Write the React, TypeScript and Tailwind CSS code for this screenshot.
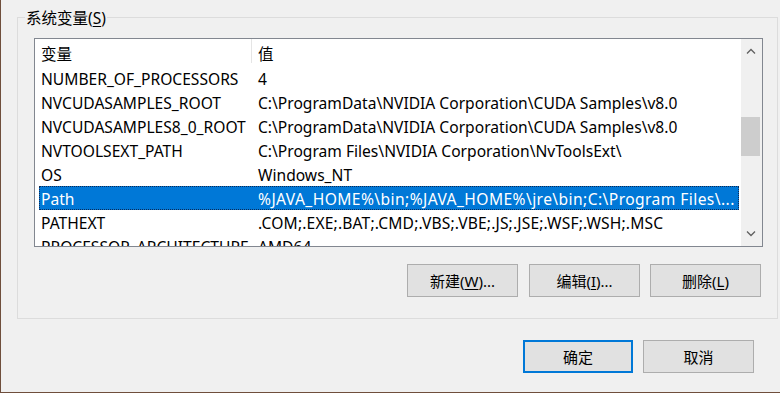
import React from "react";

const font = { fontFamily: '"Noto Sans", "Noto Sans CJK SC", sans-serif' };

const rows: [string, string][] = [
  ["NUMBER_OF_PROCESSORS", "4"],
  ["NVCUDASAMPLES_ROOT", "C:\\ProgramData\\NVIDIA Corporation\\CUDA Samples\\v8.0"],
  ["NVCUDASAMPLES8_0_ROOT", "C:\\ProgramData\\NVIDIA Corporation\\CUDA Samples\\v8.0"],
  ["NVTOOLSEXT_PATH", "C:\\Program Files\\NVIDIA Corporation\\NvToolsExt\\"],
  ["OS", "Windows_NT"],
  ["Path", "%JAVA_HOME%\\bin;%JAVA_HOME%\\jre\\bin;C:\\Program Files\\..."],
  ["PATHEXT", ".COM;.EXE;.BAT;.CMD;.VBS;.VBE;.JS;.JSE;.WSF;.WSH;.MSC"],
  ["PROCESSOR_ARCHITECTURE", "AMD64"],
];

function Btn({ children, w, primary }: { children: React.ReactNode; w: string; primary?: boolean }) {
  return (
    <div
      className={`flex h-[33px] items-center justify-center bg-[#e1e1e1] pt-[1px] text-[15px] text-black ${w} ${
        primary ? "border-2 border-[#0078d7]" : "border border-[#adadad]"
      }`}
    >
      {children}
    </div>
  );
}

function Chevron({ up }: { up?: boolean }) {
  return (
    <svg width="10" height="6" viewBox="0 0 10 6">
      <path
        d={up ? "M1 5.5 L5 1.5 L9 5.5" : "M1 0.5 L5 4.5 L9 0.5"}
        fill="none"
        stroke="#606060"
        strokeWidth="1.3"
      />
    </svg>
  );
}

export default function App() {
  return (
    <div
      className="flex h-[393px] w-[780px] flex-col overflow-hidden border-b border-l border-[#6f4e3c] bg-[#f0f0f0] text-black"
      style={font}
    >
      <div className="pl-[16px] pt-[17px]">
        <div className="relative flex h-[302px] w-[761px] flex-col border border-[#dcdcdc] pl-[16px] pt-[20px]">
          <div className="absolute left-[7px] top-[-10px] bg-[#f0f0f0] px-[1px] text-[15.5px] leading-[20px]">
            系统变量(<span className="underline underline-offset-2">S</span>)
          </div>
          {/* list box */}
          <div className="flex h-[209px] w-[729px] border border-[#828790] bg-white">
            <div className="flex w-[706px] flex-col overflow-hidden">
              <div className="flex h-[27px] shrink-0 items-start text-[15.5px]">
                <div className="w-[216px] pl-[6px] pt-[3px] leading-[24px]">变量</div>
                <div className="h-[24px] border-l border-[#e5e5e5]" />
                <div className="pl-[6px] pt-[3px] leading-[24px]">值</div>
              </div>
              {rows.map(([k, v]) => {
                const sel = k === "Path";
                return (
                  <div
                    key={k}
                    className={`flex h-[24px] shrink-0 items-center whitespace-nowrap pt-[3px] text-[15.6px] leading-[21px] ${
                      sel
                        ? "ml-[4px] mr-[2px] bg-[#0078d7] text-white outline outline-1 -outline-offset-1 outline-dotted outline-[#0d2a55]"
                        : ""
                    }`}
                  >
                    <div className={`overflow-hidden ${sel ? "w-[213px] pl-[2px]" : "w-[217px] pl-[6px]"}`}>{k}</div>
                    <div
                      className={`pl-[6px] ${
                        sel ? "tracking-[0.42px]" : k === "PATHEXT" ? "tracking-[0.16px]" : ""
                      }`}
                    >
                      {v}
                    </div>
                  </div>
                );
              })}
            </div>
            {/* scrollbar */}
            <div className="flex w-[21px] flex-col items-stretch bg-[#f0f0f0]">
              <div className="flex h-[24px] items-center justify-center pr-[2px]">
                <Chevron up />
              </div>
              <div className="mr-[2px] mt-[54px] h-[39px] bg-[#cdcdcd]" />
              <div className="flex-1" />
              <div className="flex h-[24px] items-center justify-center pr-[2px]">
                <Chevron />
              </div>
            </div>
          </div>
          {/* buttons */}
          <div className="mt-[17px] flex pl-[373px]">
            <Btn w="w-[111px]">
              新建(<span className="underline underline-offset-2">W</span>)...
            </Btn>
            <div className="w-[11px]" />
            <Btn w="w-[111px]">
              编辑(<span className="underline underline-offset-2">I</span>)...
            </Btn>
            <div className="w-[10px]" />
            <Btn w="w-[111px]">
              删除(<span className="underline underline-offset-2">L</span>)
            </Btn>
          </div>
        </div>
      </div>
      <div className="mt-[21px] flex justify-end pr-[26px]">
        <Btn w="w-[110px]" primary>
          确定
        </Btn>
        <div className="w-[10px]" />
        <Btn w="w-[111px]">取消</Btn>
      </div>
    </div>
  );
}
